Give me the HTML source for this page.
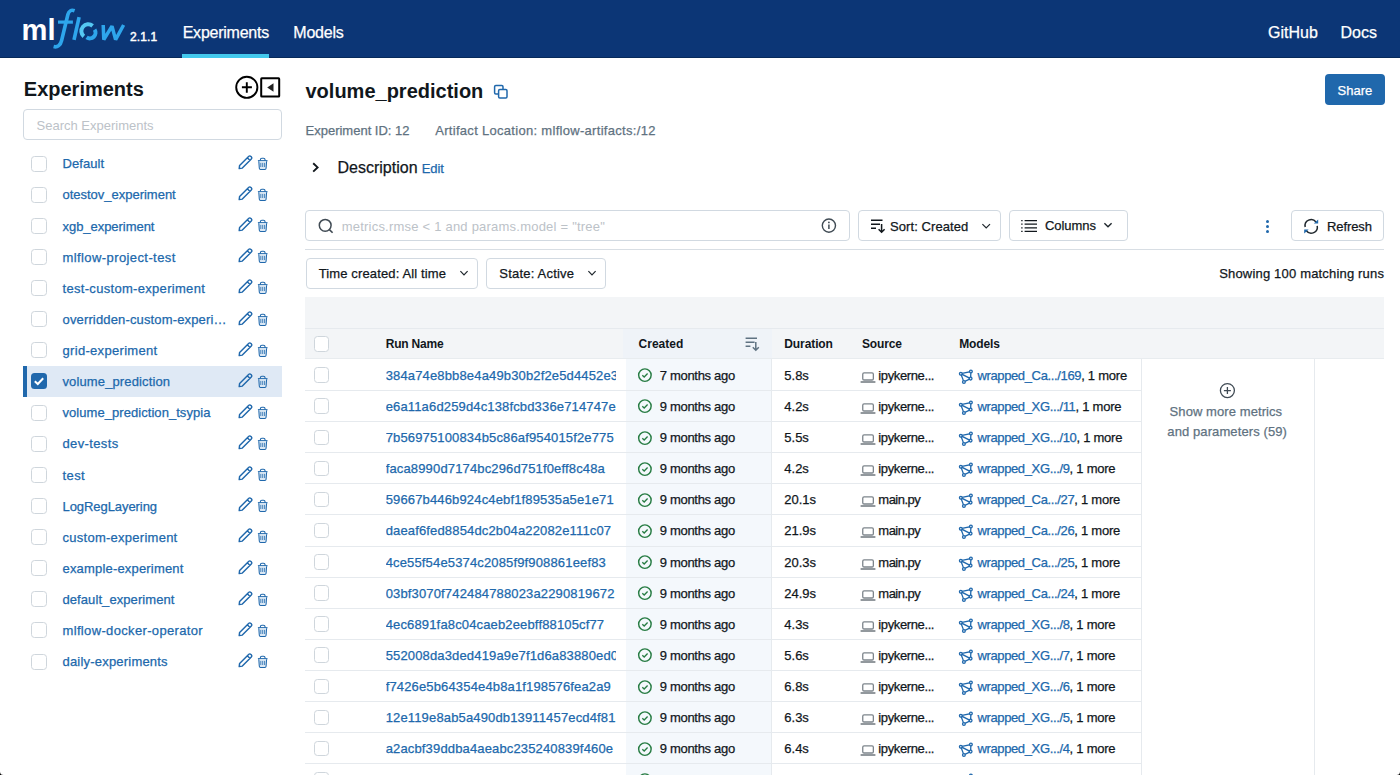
<!DOCTYPE html><html><head><meta charset="utf-8"><style>
html,body{margin:0;padding:0;width:1400px;height:775px;overflow:hidden;background:#fff;font-family:"Liberation Sans", sans-serif;}
.t{position:absolute;white-space:nowrap;-webkit-text-stroke:0.25px currentColor;}
.b{position:absolute;box-sizing:border-box;}
svg{position:absolute;overflow:visible;}
</style></head><body>
<div class="b" style="left:0px;top:0px;width:1400px;height:58px;background:#0c3676;border-bottom:1px solid #072a5a;"></div>
<div class="b" style="left:182px;top:54px;width:87px;height:4px;background:#43c9ed;"></div>
<div class="t" style="left:182.7px;top:25.26px;font-size:16px;line-height:16px;color:#fff;font-weight:400;letter-spacing:-0.24px;">Experiments</div>
<div class="t" style="left:293.3px;top:25.26px;font-size:16px;line-height:16px;color:#fff;font-weight:400;letter-spacing:-0.22px;">Models</div>
<div class="t" style="left:1268px;top:25.26px;font-size:16px;line-height:16px;color:#fff;font-weight:400;">GitHub</div>
<div class="t" style="left:1340.5px;top:25.26px;font-size:16px;line-height:16px;color:#fff;font-weight:400;">Docs</div>
<svg style="left:0;top:0" width="170" height="58">
<text x="21.5" y="40" font-family="Liberation Sans" font-weight="700" font-size="29" fill="#fff" textLength="34" lengthAdjust="spacingAndGlyphs">ml</text>
<path d="M74.6 10.8 C71.5 9.6 68.8 10.6 67.9 14.5 L61.6 40.5 C60.6 45 57.6 47.6 53.6 46.6" stroke="#2ea6ec" stroke-width="3.6" fill="none" stroke-linecap="butt"/>
<path d="M58 22.1 L72.9 22.1" stroke="#2ea6ec" stroke-width="3.2" fill="none"/>
<path d="M79.1 17.2 L74 39.8" stroke="#2ea6ec" stroke-width="3.6" fill="none"/>
<path d="M83.8 36.4 A5.7 5.7 0 0 1 92.6 25.9" stroke="#55c8f2" stroke-width="4" fill="none"/>
<path d="M94.6 29.6 A5.7 5.7 0 0 1 86.6 37.4" stroke="#2ea6ec" stroke-width="4" fill="none"/>
<path d="M103.2 25 L103.8 39.6 L112 26.2 L115.6 39.6 L123.6 25" stroke="#2ea6ec" stroke-width="3.5" fill="none" stroke-linejoin="bevel"/>
</svg>
<div class="t" style="left:130px;top:30.84px;font-size:12px;line-height:12px;color:#fff;font-weight:400;letter-spacing:0.1px;-webkit-text-stroke:0.45px #fff;">2.1.1</div>
<div class="t" style="left:23.8px;top:79.07px;font-size:20px;line-height:20px;color:#11171c;font-weight:700;-webkit-text-stroke:0;">Experiments</div>
<svg style="left:234px;top:75px" width="48" height="25">
<circle cx="12.8" cy="12.3" r="10.6" stroke="#000" stroke-width="1.9" fill="none"/>
<path d="M7.9 12.3 H17.9 M12.8 7.3 V17.7" stroke="#000" stroke-width="1.9"/>
<rect x="27.2" y="3.3" width="18" height="18.2" stroke="#000" stroke-width="2" fill="none" rx="0.6"/>
<path d="M33.2 12.4 L39.5 8.2 L39.5 16.8 Z" fill="#222"/>
</svg>
<div class="b" style="left:23px;top:109px;width:259px;height:31px;border:1px solid #d1d9e1;border-radius:4px;"></div>
<div class="t" style="left:36.5px;top:118.50px;font-size:13px;line-height:13px;color:#bcc2c8;font-weight:400;-webkit-text-stroke:0;">Search Experiments</div>
<div class="b" style="left:31px;top:155.56px;width:16px;height:16.0px;border:1px solid #cfd6dc;border-radius:3.5px;background:#fff;"></div>
<div class="t" style="left:62.5px;top:157.36px;font-size:13px;line-height:13px;color:#2068ac;font-weight:400;letter-spacing:0.057px;">Default</div>
<svg style="left:237px;top:154.96px" width="34" height="16">
<path d="M2.2 13.6 L2.6 10.4 L11.6 1.4 C12.3 0.7 13.2 0.7 13.9 1.4 L14.3 1.8 C15 2.5 15 3.4 14.3 4.1 L5.3 13.1 Z M10.3 2.7 L13 5.4" stroke="#2068ac" stroke-width="1.45" fill="none" stroke-linejoin="round"/>
<path d="M20.9 5.7 H30.5" stroke="#2068ac" stroke-width="1.15"/>
<path d="M23.4 5.5 V4.6 C23.4 3.7 24 3.3 24.9 3.3 H26.5 C27.4 3.3 28 3.7 28 4.6 V5.5" stroke="#2068ac" stroke-width="1.1" fill="none"/>
<path d="M21.8 6.2 L22.3 13.3 C22.4 14 22.8 14.4 23.5 14.4 H27.9 C28.6 14.4 29 14 29.1 13.3 L29.6 6.2" stroke="#2068ac" stroke-width="1.05" fill="#dbe8f4"/>
<path d="M23.8 7.9 V12 M25.7 7.9 V12 M27.6 7.9 V12" stroke="#2068ac" stroke-width="0.8"/>
</svg>
<div class="b" style="left:31px;top:186.685px;width:16px;height:16.0px;border:1px solid #cfd6dc;border-radius:3.5px;background:#fff;"></div>
<div class="t" style="left:62.5px;top:188.48px;font-size:13px;line-height:13px;color:#2068ac;font-weight:400;letter-spacing:-0.014px;">otestov_experiment</div>
<svg style="left:237px;top:186.09px" width="34" height="16">
<path d="M2.2 13.6 L2.6 10.4 L11.6 1.4 C12.3 0.7 13.2 0.7 13.9 1.4 L14.3 1.8 C15 2.5 15 3.4 14.3 4.1 L5.3 13.1 Z M10.3 2.7 L13 5.4" stroke="#2068ac" stroke-width="1.45" fill="none" stroke-linejoin="round"/>
<path d="M20.9 5.7 H30.5" stroke="#2068ac" stroke-width="1.15"/>
<path d="M23.4 5.5 V4.6 C23.4 3.7 24 3.3 24.9 3.3 H26.5 C27.4 3.3 28 3.7 28 4.6 V5.5" stroke="#2068ac" stroke-width="1.1" fill="none"/>
<path d="M21.8 6.2 L22.3 13.3 C22.4 14 22.8 14.4 23.5 14.4 H27.9 C28.6 14.4 29 14 29.1 13.3 L29.6 6.2" stroke="#2068ac" stroke-width="1.05" fill="#dbe8f4"/>
<path d="M23.8 7.9 V12 M25.7 7.9 V12 M27.6 7.9 V12" stroke="#2068ac" stroke-width="0.8"/>
</svg>
<div class="b" style="left:31px;top:217.81px;width:16px;height:16.0px;border:1px solid #cfd6dc;border-radius:3.5px;background:#fff;"></div>
<div class="t" style="left:62.5px;top:219.61px;font-size:13px;line-height:13px;color:#2068ac;font-weight:400;letter-spacing:-0.043px;">xgb_experiment</div>
<svg style="left:237px;top:217.21px" width="34" height="16">
<path d="M2.2 13.6 L2.6 10.4 L11.6 1.4 C12.3 0.7 13.2 0.7 13.9 1.4 L14.3 1.8 C15 2.5 15 3.4 14.3 4.1 L5.3 13.1 Z M10.3 2.7 L13 5.4" stroke="#2068ac" stroke-width="1.45" fill="none" stroke-linejoin="round"/>
<path d="M20.9 5.7 H30.5" stroke="#2068ac" stroke-width="1.15"/>
<path d="M23.4 5.5 V4.6 C23.4 3.7 24 3.3 24.9 3.3 H26.5 C27.4 3.3 28 3.7 28 4.6 V5.5" stroke="#2068ac" stroke-width="1.1" fill="none"/>
<path d="M21.8 6.2 L22.3 13.3 C22.4 14 22.8 14.4 23.5 14.4 H27.9 C28.6 14.4 29 14 29.1 13.3 L29.6 6.2" stroke="#2068ac" stroke-width="1.05" fill="#dbe8f4"/>
<path d="M23.8 7.9 V12 M25.7 7.9 V12 M27.6 7.9 V12" stroke="#2068ac" stroke-width="0.8"/>
</svg>
<div class="b" style="left:31px;top:248.935px;width:16px;height:16.0px;border:1px solid #cfd6dc;border-radius:3.5px;background:#fff;"></div>
<div class="t" style="left:62.5px;top:250.73px;font-size:13px;line-height:13px;color:#2068ac;font-weight:400;letter-spacing:0.407px;">mlflow-project-test</div>
<svg style="left:237px;top:248.34px" width="34" height="16">
<path d="M2.2 13.6 L2.6 10.4 L11.6 1.4 C12.3 0.7 13.2 0.7 13.9 1.4 L14.3 1.8 C15 2.5 15 3.4 14.3 4.1 L5.3 13.1 Z M10.3 2.7 L13 5.4" stroke="#2068ac" stroke-width="1.45" fill="none" stroke-linejoin="round"/>
<path d="M20.9 5.7 H30.5" stroke="#2068ac" stroke-width="1.15"/>
<path d="M23.4 5.5 V4.6 C23.4 3.7 24 3.3 24.9 3.3 H26.5 C27.4 3.3 28 3.7 28 4.6 V5.5" stroke="#2068ac" stroke-width="1.1" fill="none"/>
<path d="M21.8 6.2 L22.3 13.3 C22.4 14 22.8 14.4 23.5 14.4 H27.9 C28.6 14.4 29 14 29.1 13.3 L29.6 6.2" stroke="#2068ac" stroke-width="1.05" fill="#dbe8f4"/>
<path d="M23.8 7.9 V12 M25.7 7.9 V12 M27.6 7.9 V12" stroke="#2068ac" stroke-width="0.8"/>
</svg>
<div class="b" style="left:31px;top:280.06px;width:16px;height:16.0px;border:1px solid #cfd6dc;border-radius:3.5px;background:#fff;"></div>
<div class="t" style="left:62.5px;top:281.86px;font-size:13px;line-height:13px;color:#2068ac;font-weight:400;letter-spacing:0.308px;">test-custom-experiment</div>
<svg style="left:237px;top:279.46px" width="34" height="16">
<path d="M2.2 13.6 L2.6 10.4 L11.6 1.4 C12.3 0.7 13.2 0.7 13.9 1.4 L14.3 1.8 C15 2.5 15 3.4 14.3 4.1 L5.3 13.1 Z M10.3 2.7 L13 5.4" stroke="#2068ac" stroke-width="1.45" fill="none" stroke-linejoin="round"/>
<path d="M20.9 5.7 H30.5" stroke="#2068ac" stroke-width="1.15"/>
<path d="M23.4 5.5 V4.6 C23.4 3.7 24 3.3 24.9 3.3 H26.5 C27.4 3.3 28 3.7 28 4.6 V5.5" stroke="#2068ac" stroke-width="1.1" fill="none"/>
<path d="M21.8 6.2 L22.3 13.3 C22.4 14 22.8 14.4 23.5 14.4 H27.9 C28.6 14.4 29 14 29.1 13.3 L29.6 6.2" stroke="#2068ac" stroke-width="1.05" fill="#dbe8f4"/>
<path d="M23.8 7.9 V12 M25.7 7.9 V12 M27.6 7.9 V12" stroke="#2068ac" stroke-width="0.8"/>
</svg>
<div class="b" style="left:31px;top:311.185px;width:16px;height:16.0px;border:1px solid #cfd6dc;border-radius:3.5px;background:#fff;"></div>
<div class="t" style="left:62.5px;top:312.98px;font-size:13px;line-height:13px;color:#2068ac;font-weight:400;letter-spacing:0.148px;">overridden-custom-experi…</div>
<svg style="left:237px;top:310.58px" width="34" height="16">
<path d="M2.2 13.6 L2.6 10.4 L11.6 1.4 C12.3 0.7 13.2 0.7 13.9 1.4 L14.3 1.8 C15 2.5 15 3.4 14.3 4.1 L5.3 13.1 Z M10.3 2.7 L13 5.4" stroke="#2068ac" stroke-width="1.45" fill="none" stroke-linejoin="round"/>
<path d="M20.9 5.7 H30.5" stroke="#2068ac" stroke-width="1.15"/>
<path d="M23.4 5.5 V4.6 C23.4 3.7 24 3.3 24.9 3.3 H26.5 C27.4 3.3 28 3.7 28 4.6 V5.5" stroke="#2068ac" stroke-width="1.1" fill="none"/>
<path d="M21.8 6.2 L22.3 13.3 C22.4 14 22.8 14.4 23.5 14.4 H27.9 C28.6 14.4 29 14 29.1 13.3 L29.6 6.2" stroke="#2068ac" stroke-width="1.05" fill="#dbe8f4"/>
<path d="M23.8 7.9 V12 M25.7 7.9 V12 M27.6 7.9 V12" stroke="#2068ac" stroke-width="0.8"/>
</svg>
<div class="b" style="left:31px;top:342.31px;width:16px;height:16.0px;border:1px solid #cfd6dc;border-radius:3.5px;background:#fff;"></div>
<div class="t" style="left:62.5px;top:344.11px;font-size:13px;line-height:13px;color:#2068ac;font-weight:400;letter-spacing:0.311px;">grid-experiment</div>
<svg style="left:237px;top:341.71px" width="34" height="16">
<path d="M2.2 13.6 L2.6 10.4 L11.6 1.4 C12.3 0.7 13.2 0.7 13.9 1.4 L14.3 1.8 C15 2.5 15 3.4 14.3 4.1 L5.3 13.1 Z M10.3 2.7 L13 5.4" stroke="#2068ac" stroke-width="1.45" fill="none" stroke-linejoin="round"/>
<path d="M20.9 5.7 H30.5" stroke="#2068ac" stroke-width="1.15"/>
<path d="M23.4 5.5 V4.6 C23.4 3.7 24 3.3 24.9 3.3 H26.5 C27.4 3.3 28 3.7 28 4.6 V5.5" stroke="#2068ac" stroke-width="1.1" fill="none"/>
<path d="M21.8 6.2 L22.3 13.3 C22.4 14 22.8 14.4 23.5 14.4 H27.9 C28.6 14.4 29 14 29.1 13.3 L29.6 6.2" stroke="#2068ac" stroke-width="1.05" fill="#dbe8f4"/>
<path d="M23.8 7.9 V12 M25.7 7.9 V12 M27.6 7.9 V12" stroke="#2068ac" stroke-width="0.8"/>
</svg>
<div class="b" style="left:23px;top:365.875px;width:259px;height:31.125px;background:#dfe9f5;"></div>
<div class="b" style="left:23px;top:365.875px;width:4px;height:31.125px;background:#2068ac;"></div>
<svg style="left:31px;top:373.44px" width="16" height="16"><rect x="0" y="0" width="16" height="16" rx="3.5" fill="#2068ac"/><path d="M3.8 8.2 L6.8 11 L12.2 5.2" stroke="#fff" stroke-width="2" fill="none"/></svg>
<div class="t" style="left:62.5px;top:375.23px;font-size:13px;line-height:13px;color:#2068ac;font-weight:400;letter-spacing:0.123px;">volume_prediction</div>
<svg style="left:237px;top:372.83px" width="34" height="16">
<path d="M2.2 13.6 L2.6 10.4 L11.6 1.4 C12.3 0.7 13.2 0.7 13.9 1.4 L14.3 1.8 C15 2.5 15 3.4 14.3 4.1 L5.3 13.1 Z M10.3 2.7 L13 5.4" stroke="#2068ac" stroke-width="1.45" fill="none" stroke-linejoin="round"/>
<path d="M20.9 5.7 H30.5" stroke="#2068ac" stroke-width="1.15"/>
<path d="M23.4 5.5 V4.6 C23.4 3.7 24 3.3 24.9 3.3 H26.5 C27.4 3.3 28 3.7 28 4.6 V5.5" stroke="#2068ac" stroke-width="1.1" fill="none"/>
<path d="M21.8 6.2 L22.3 13.3 C22.4 14 22.8 14.4 23.5 14.4 H27.9 C28.6 14.4 29 14 29.1 13.3 L29.6 6.2" stroke="#2068ac" stroke-width="1.05" fill="#dbe8f4"/>
<path d="M23.8 7.9 V12 M25.7 7.9 V12 M27.6 7.9 V12" stroke="#2068ac" stroke-width="0.8"/>
</svg>
<div class="b" style="left:31px;top:404.56px;width:16px;height:16.0px;border:1px solid #cfd6dc;border-radius:3.5px;background:#fff;"></div>
<div class="t" style="left:62.5px;top:406.36px;font-size:13px;line-height:13px;color:#2068ac;font-weight:400;letter-spacing:0.054px;">volume_prediction_tsypia</div>
<svg style="left:237px;top:403.96px" width="34" height="16">
<path d="M2.2 13.6 L2.6 10.4 L11.6 1.4 C12.3 0.7 13.2 0.7 13.9 1.4 L14.3 1.8 C15 2.5 15 3.4 14.3 4.1 L5.3 13.1 Z M10.3 2.7 L13 5.4" stroke="#2068ac" stroke-width="1.45" fill="none" stroke-linejoin="round"/>
<path d="M20.9 5.7 H30.5" stroke="#2068ac" stroke-width="1.15"/>
<path d="M23.4 5.5 V4.6 C23.4 3.7 24 3.3 24.9 3.3 H26.5 C27.4 3.3 28 3.7 28 4.6 V5.5" stroke="#2068ac" stroke-width="1.1" fill="none"/>
<path d="M21.8 6.2 L22.3 13.3 C22.4 14 22.8 14.4 23.5 14.4 H27.9 C28.6 14.4 29 14 29.1 13.3 L29.6 6.2" stroke="#2068ac" stroke-width="1.05" fill="#dbe8f4"/>
<path d="M23.8 7.9 V12 M25.7 7.9 V12 M27.6 7.9 V12" stroke="#2068ac" stroke-width="0.8"/>
</svg>
<div class="b" style="left:31px;top:435.685px;width:16px;height:16.0px;border:1px solid #cfd6dc;border-radius:3.5px;background:#fff;"></div>
<div class="t" style="left:62.5px;top:437.48px;font-size:13px;line-height:13px;color:#2068ac;font-weight:400;letter-spacing:0.361px;">dev-tests</div>
<svg style="left:237px;top:435.08px" width="34" height="16">
<path d="M2.2 13.6 L2.6 10.4 L11.6 1.4 C12.3 0.7 13.2 0.7 13.9 1.4 L14.3 1.8 C15 2.5 15 3.4 14.3 4.1 L5.3 13.1 Z M10.3 2.7 L13 5.4" stroke="#2068ac" stroke-width="1.45" fill="none" stroke-linejoin="round"/>
<path d="M20.9 5.7 H30.5" stroke="#2068ac" stroke-width="1.15"/>
<path d="M23.4 5.5 V4.6 C23.4 3.7 24 3.3 24.9 3.3 H26.5 C27.4 3.3 28 3.7 28 4.6 V5.5" stroke="#2068ac" stroke-width="1.1" fill="none"/>
<path d="M21.8 6.2 L22.3 13.3 C22.4 14 22.8 14.4 23.5 14.4 H27.9 C28.6 14.4 29 14 29.1 13.3 L29.6 6.2" stroke="#2068ac" stroke-width="1.05" fill="#dbe8f4"/>
<path d="M23.8 7.9 V12 M25.7 7.9 V12 M27.6 7.9 V12" stroke="#2068ac" stroke-width="0.8"/>
</svg>
<div class="b" style="left:31px;top:466.81px;width:16px;height:16.0px;border:1px solid #cfd6dc;border-radius:3.5px;background:#fff;"></div>
<div class="t" style="left:62.5px;top:468.61px;font-size:13px;line-height:13px;color:#2068ac;font-weight:400;letter-spacing:0.408px;">test</div>
<svg style="left:237px;top:466.21px" width="34" height="16">
<path d="M2.2 13.6 L2.6 10.4 L11.6 1.4 C12.3 0.7 13.2 0.7 13.9 1.4 L14.3 1.8 C15 2.5 15 3.4 14.3 4.1 L5.3 13.1 Z M10.3 2.7 L13 5.4" stroke="#2068ac" stroke-width="1.45" fill="none" stroke-linejoin="round"/>
<path d="M20.9 5.7 H30.5" stroke="#2068ac" stroke-width="1.15"/>
<path d="M23.4 5.5 V4.6 C23.4 3.7 24 3.3 24.9 3.3 H26.5 C27.4 3.3 28 3.7 28 4.6 V5.5" stroke="#2068ac" stroke-width="1.1" fill="none"/>
<path d="M21.8 6.2 L22.3 13.3 C22.4 14 22.8 14.4 23.5 14.4 H27.9 C28.6 14.4 29 14 29.1 13.3 L29.6 6.2" stroke="#2068ac" stroke-width="1.05" fill="#dbe8f4"/>
<path d="M23.8 7.9 V12 M25.7 7.9 V12 M27.6 7.9 V12" stroke="#2068ac" stroke-width="0.8"/>
</svg>
<div class="b" style="left:31px;top:497.935px;width:16px;height:15.999999999999943px;border:1px solid #cfd6dc;border-radius:3.5px;background:#fff;"></div>
<div class="t" style="left:62.5px;top:499.73px;font-size:13px;line-height:13px;color:#2068ac;font-weight:400;letter-spacing:-0.065px;">LogRegLayering</div>
<svg style="left:237px;top:497.33px" width="34" height="16">
<path d="M2.2 13.6 L2.6 10.4 L11.6 1.4 C12.3 0.7 13.2 0.7 13.9 1.4 L14.3 1.8 C15 2.5 15 3.4 14.3 4.1 L5.3 13.1 Z M10.3 2.7 L13 5.4" stroke="#2068ac" stroke-width="1.45" fill="none" stroke-linejoin="round"/>
<path d="M20.9 5.7 H30.5" stroke="#2068ac" stroke-width="1.15"/>
<path d="M23.4 5.5 V4.6 C23.4 3.7 24 3.3 24.9 3.3 H26.5 C27.4 3.3 28 3.7 28 4.6 V5.5" stroke="#2068ac" stroke-width="1.1" fill="none"/>
<path d="M21.8 6.2 L22.3 13.3 C22.4 14 22.8 14.4 23.5 14.4 H27.9 C28.6 14.4 29 14 29.1 13.3 L29.6 6.2" stroke="#2068ac" stroke-width="1.05" fill="#dbe8f4"/>
<path d="M23.8 7.9 V12 M25.7 7.9 V12 M27.6 7.9 V12" stroke="#2068ac" stroke-width="0.8"/>
</svg>
<div class="b" style="left:31px;top:529.06px;width:16px;height:16.0px;border:1px solid #cfd6dc;border-radius:3.5px;background:#fff;"></div>
<div class="t" style="left:62.5px;top:530.86px;font-size:13px;line-height:13px;color:#2068ac;font-weight:400;letter-spacing:0.262px;">custom-experiment</div>
<svg style="left:237px;top:528.46px" width="34" height="16">
<path d="M2.2 13.6 L2.6 10.4 L11.6 1.4 C12.3 0.7 13.2 0.7 13.9 1.4 L14.3 1.8 C15 2.5 15 3.4 14.3 4.1 L5.3 13.1 Z M10.3 2.7 L13 5.4" stroke="#2068ac" stroke-width="1.45" fill="none" stroke-linejoin="round"/>
<path d="M20.9 5.7 H30.5" stroke="#2068ac" stroke-width="1.15"/>
<path d="M23.4 5.5 V4.6 C23.4 3.7 24 3.3 24.9 3.3 H26.5 C27.4 3.3 28 3.7 28 4.6 V5.5" stroke="#2068ac" stroke-width="1.1" fill="none"/>
<path d="M21.8 6.2 L22.3 13.3 C22.4 14 22.8 14.4 23.5 14.4 H27.9 C28.6 14.4 29 14 29.1 13.3 L29.6 6.2" stroke="#2068ac" stroke-width="1.05" fill="#dbe8f4"/>
<path d="M23.8 7.9 V12 M25.7 7.9 V12 M27.6 7.9 V12" stroke="#2068ac" stroke-width="0.8"/>
</svg>
<div class="b" style="left:31px;top:560.185px;width:16px;height:16.0px;border:1px solid #cfd6dc;border-radius:3.5px;background:#fff;"></div>
<div class="t" style="left:62.5px;top:561.98px;font-size:13px;line-height:13px;color:#2068ac;font-weight:400;letter-spacing:0.179px;">example-experiment</div>
<svg style="left:237px;top:559.58px" width="34" height="16">
<path d="M2.2 13.6 L2.6 10.4 L11.6 1.4 C12.3 0.7 13.2 0.7 13.9 1.4 L14.3 1.8 C15 2.5 15 3.4 14.3 4.1 L5.3 13.1 Z M10.3 2.7 L13 5.4" stroke="#2068ac" stroke-width="1.45" fill="none" stroke-linejoin="round"/>
<path d="M20.9 5.7 H30.5" stroke="#2068ac" stroke-width="1.15"/>
<path d="M23.4 5.5 V4.6 C23.4 3.7 24 3.3 24.9 3.3 H26.5 C27.4 3.3 28 3.7 28 4.6 V5.5" stroke="#2068ac" stroke-width="1.1" fill="none"/>
<path d="M21.8 6.2 L22.3 13.3 C22.4 14 22.8 14.4 23.5 14.4 H27.9 C28.6 14.4 29 14 29.1 13.3 L29.6 6.2" stroke="#2068ac" stroke-width="1.05" fill="#dbe8f4"/>
<path d="M23.8 7.9 V12 M25.7 7.9 V12 M27.6 7.9 V12" stroke="#2068ac" stroke-width="0.8"/>
</svg>
<div class="b" style="left:31px;top:591.31px;width:16px;height:16.0px;border:1px solid #cfd6dc;border-radius:3.5px;background:#fff;"></div>
<div class="t" style="left:62.5px;top:593.11px;font-size:13px;line-height:13px;color:#2068ac;font-weight:400;letter-spacing:0.079px;">default_experiment</div>
<svg style="left:237px;top:590.71px" width="34" height="16">
<path d="M2.2 13.6 L2.6 10.4 L11.6 1.4 C12.3 0.7 13.2 0.7 13.9 1.4 L14.3 1.8 C15 2.5 15 3.4 14.3 4.1 L5.3 13.1 Z M10.3 2.7 L13 5.4" stroke="#2068ac" stroke-width="1.45" fill="none" stroke-linejoin="round"/>
<path d="M20.9 5.7 H30.5" stroke="#2068ac" stroke-width="1.15"/>
<path d="M23.4 5.5 V4.6 C23.4 3.7 24 3.3 24.9 3.3 H26.5 C27.4 3.3 28 3.7 28 4.6 V5.5" stroke="#2068ac" stroke-width="1.1" fill="none"/>
<path d="M21.8 6.2 L22.3 13.3 C22.4 14 22.8 14.4 23.5 14.4 H27.9 C28.6 14.4 29 14 29.1 13.3 L29.6 6.2" stroke="#2068ac" stroke-width="1.05" fill="#dbe8f4"/>
<path d="M23.8 7.9 V12 M25.7 7.9 V12 M27.6 7.9 V12" stroke="#2068ac" stroke-width="0.8"/>
</svg>
<div class="b" style="left:31px;top:622.435px;width:16px;height:16.0px;border:1px solid #cfd6dc;border-radius:3.5px;background:#fff;"></div>
<div class="t" style="left:62.5px;top:624.23px;font-size:13px;line-height:13px;color:#2068ac;font-weight:400;letter-spacing:0.344px;">mlflow-docker-operator</div>
<svg style="left:237px;top:621.83px" width="34" height="16">
<path d="M2.2 13.6 L2.6 10.4 L11.6 1.4 C12.3 0.7 13.2 0.7 13.9 1.4 L14.3 1.8 C15 2.5 15 3.4 14.3 4.1 L5.3 13.1 Z M10.3 2.7 L13 5.4" stroke="#2068ac" stroke-width="1.45" fill="none" stroke-linejoin="round"/>
<path d="M20.9 5.7 H30.5" stroke="#2068ac" stroke-width="1.15"/>
<path d="M23.4 5.5 V4.6 C23.4 3.7 24 3.3 24.9 3.3 H26.5 C27.4 3.3 28 3.7 28 4.6 V5.5" stroke="#2068ac" stroke-width="1.1" fill="none"/>
<path d="M21.8 6.2 L22.3 13.3 C22.4 14 22.8 14.4 23.5 14.4 H27.9 C28.6 14.4 29 14 29.1 13.3 L29.6 6.2" stroke="#2068ac" stroke-width="1.05" fill="#dbe8f4"/>
<path d="M23.8 7.9 V12 M25.7 7.9 V12 M27.6 7.9 V12" stroke="#2068ac" stroke-width="0.8"/>
</svg>
<div class="b" style="left:31px;top:653.56px;width:16px;height:16.0px;border:1px solid #cfd6dc;border-radius:3.5px;background:#fff;"></div>
<div class="t" style="left:62.5px;top:655.36px;font-size:13px;line-height:13px;color:#2068ac;font-weight:400;letter-spacing:0.201px;">daily-experiments</div>
<svg style="left:237px;top:652.96px" width="34" height="16">
<path d="M2.2 13.6 L2.6 10.4 L11.6 1.4 C12.3 0.7 13.2 0.7 13.9 1.4 L14.3 1.8 C15 2.5 15 3.4 14.3 4.1 L5.3 13.1 Z M10.3 2.7 L13 5.4" stroke="#2068ac" stroke-width="1.45" fill="none" stroke-linejoin="round"/>
<path d="M20.9 5.7 H30.5" stroke="#2068ac" stroke-width="1.15"/>
<path d="M23.4 5.5 V4.6 C23.4 3.7 24 3.3 24.9 3.3 H26.5 C27.4 3.3 28 3.7 28 4.6 V5.5" stroke="#2068ac" stroke-width="1.1" fill="none"/>
<path d="M21.8 6.2 L22.3 13.3 C22.4 14 22.8 14.4 23.5 14.4 H27.9 C28.6 14.4 29 14 29.1 13.3 L29.6 6.2" stroke="#2068ac" stroke-width="1.05" fill="#dbe8f4"/>
<path d="M23.8 7.9 V12 M25.7 7.9 V12 M27.6 7.9 V12" stroke="#2068ac" stroke-width="0.8"/>
</svg>
<div class="t" style="left:305.5px;top:81.07px;font-size:20px;line-height:20px;color:#11171c;font-weight:700;-webkit-text-stroke:0;">volume_prediction</div>
<svg style="left:493px;top:84px" width="16" height="16"><rect x="1.6" y="1.6" width="8.4" height="8.4" rx="1.2" stroke="#2068ac" stroke-width="1.5" fill="#fff"/><rect x="5.6" y="5.6" width="8.4" height="8.4" rx="1.2" stroke="#2068ac" stroke-width="1.5" fill="#fff"/></svg>
<div class="t" style="left:305.5px;top:124.00px;font-size:13px;line-height:13px;color:#5f7281;font-weight:400;">Experiment ID: 12</div>
<div class="t" style="left:435.2px;top:124.00px;font-size:13px;line-height:13px;color:#5f7281;font-weight:400;letter-spacing:0.3px;">Artifact Location: mlflow-artifacts:/12</div>
<svg style="left:310px;top:160px" width="12" height="14"><path d="M3.2 3.2 L7.6 7.4 L3.2 11.6" stroke="#11171c" stroke-width="1.9" fill="none"/></svg>
<div class="t" style="left:337.5px;top:160.06px;font-size:16px;line-height:16px;color:#11171c;font-weight:400;">Description</div>
<div class="t" style="left:421.7px;top:161.60px;font-size:13px;line-height:13px;color:#2068ac;font-weight:400;letter-spacing:-0.1px;">Edit</div>
<div class="b" style="left:305px;top:210px;width:544.5px;height:31px;border:1px solid #d1d9e1;border-radius:4px;"></div>
<svg style="left:317px;top:217px" width="18" height="18"><circle cx="8.2" cy="8.3" r="5.9" stroke="#404b54" stroke-width="1.5" fill="none"/><path d="M12.4 12.6 L15.6 15.8" stroke="#404b54" stroke-width="1.6"/></svg>
<div class="t" style="left:341.7px;top:219.50px;font-size:13px;line-height:13px;color:#bcc2c8;font-weight:400;letter-spacing:0.22px;-webkit-text-stroke:0;">metrics.rmse &lt; 1 and params.model = "tree"</div>
<svg style="left:820px;top:217px" width="18" height="18"><circle cx="8.9" cy="8.6" r="6.6" stroke="#404b54" stroke-width="1.4" fill="none"/><path d="M8.9 7.6 V12" stroke="#404b54" stroke-width="1.5"/><circle cx="8.9" cy="5.4" r="0.9" fill="#404b54"/></svg>
<div class="b" style="left:857.5px;top:210px;width:143.0px;height:31px;border:1px solid #d1d9e1;border-radius:4px;"></div>
<svg style="left:869px;top:218px" width="18" height="16"><path d="M2 2.2 H13.5 M2 6.2 H11 M2 10.2 H7" stroke="#11171c" stroke-width="1.5"/><path d="M12.6 6 V14 M9.6 11.2 L12.6 14.2 L15.6 11.2" stroke="#11171c" stroke-width="1.5" fill="none"/></svg>
<div class="t" style="left:890px;top:219.50px;font-size:13px;line-height:13px;color:#11171c;font-weight:400;letter-spacing:0.08px;">Sort: Created</div>
<svg style="left:980px;top:221px" width="12" height="10"><path d="M2.4 3.2 L6.2 7 L10 3.2" stroke="#1f272d" stroke-width="1.2" fill="none"/></svg>
<div class="b" style="left:1009px;top:210px;width:118.5px;height:31px;border:1px solid #d1d9e1;border-radius:4px;"></div>
<svg style="left:1020px;top:218px" width="18" height="16"><path d="M1.2 2.6 H2.6 M1.2 6.2 H2.6 M1.2 9.8 H2.6 M1.2 13.4 H2.6" stroke="#11171c" stroke-width="1.3"/><path d="M4.6 2.6 H17 M4.6 6.2 H17 M4.6 9.8 H17 M4.6 13.4 H17" stroke="#11171c" stroke-width="1.3"/></svg>
<div class="t" style="left:1045px;top:219.00px;font-size:13px;line-height:13px;color:#11171c;font-weight:400;letter-spacing:-0.05px;">Columns</div>
<svg style="left:1102px;top:220px" width="12" height="10"><path d="M2.4 3.2 L6 6.8 L9.6 3.2" stroke="#1f272d" stroke-width="1.4" fill="none"/></svg>
<div class="b" style="left:1265.6px;top:219.5px;width:3.0px;height:3.0px;background:#2068ac;border-radius:50%;"></div>
<div class="b" style="left:1265.6px;top:224.5px;width:3.0px;height:3.0px;background:#2068ac;border-radius:50%;"></div>
<div class="b" style="left:1265.6px;top:229.5px;width:3.0px;height:3.0px;background:#2068ac;border-radius:50%;"></div>
<div class="b" style="left:1291px;top:210px;width:93px;height:31px;border:1px solid #d1d9e1;border-radius:4px;"></div>
<svg style="left:1302px;top:217px" width="18" height="18"><path d="M3.2 10 A6.1 6.1 0 0 1 14 5" stroke="#1f272d" stroke-width="1.5" fill="none"/><path d="M15.2 8.8 A6.1 6.1 0 0 1 4.4 13.8" stroke="#1f272d" stroke-width="1.5" fill="none"/><path d="M11.8 6.4 L16.2 6.6 L16.2 2.4 Z" fill="#2068ac"/><path d="M6.6 12.6 L2.2 12.4 L2.2 16.4 Z" fill="#2068ac"/></svg>
<div class="t" style="left:1327.1px;top:219.50px;font-size:13px;line-height:13px;color:#11171c;font-weight:400;letter-spacing:-0.12px;">Refresh</div>
<div class="b" style="left:305px;top:248.5px;width:1079px;height:1.0px;background:#d8dee4;"></div>
<div class="b" style="left:305.5px;top:258px;width:172.5px;height:31px;border:1px solid #d1d9e1;border-radius:4px;"></div>
<div class="t" style="left:318.7px;top:267.00px;font-size:13px;line-height:13px;color:#11171c;font-weight:400;letter-spacing:0.13px;">Time created: All time</div>
<svg style="left:458px;top:268px" width="12" height="10"><path d="M2.4 3.2 L6 6.8 L9.6 3.2" stroke="#1f272d" stroke-width="1.2" fill="none"/></svg>
<div class="b" style="left:486px;top:258px;width:120px;height:31px;border:1px solid #d1d9e1;border-radius:4px;"></div>
<div class="t" style="left:499.3px;top:267.00px;font-size:13px;line-height:13px;color:#11171c;font-weight:400;letter-spacing:0.2px;">State: Active</div>
<svg style="left:585.5px;top:268px" width="12" height="10"><path d="M2.4 3.2 L6 6.8 L9.6 3.2" stroke="#1f272d" stroke-width="1.2" fill="none"/></svg>
<div class="t" style="left:1219.2px;top:267.00px;font-size:13px;line-height:13px;color:#11171c;font-weight:400;letter-spacing:0.18px;">Showing 100 matching runs</div>
<div class="b" style="left:305px;top:296.5px;width:1079px;height:32.0px;background:#f3f5f7;"></div>
<div class="b" style="left:305px;top:328.3px;width:1079px;height:31.0px;background:#f3f5f7;border-top:1px solid #e6eaee;"></div>
<div class="b" style="left:623px;top:328.3px;width:148.5px;height:31.0px;background:#eff3f8;border-top:1px solid #e6eaee;"></div>
<div class="b" style="left:305px;top:358.3px;width:1079px;height:1.0px;background:#e8ecef;"></div>
<div class="b" style="left:313.5px;top:336px;width:15.5px;height:15.5px;border:1px solid #cfd6dc;border-radius:3.5px;background:#fff;"></div>
<div class="t" style="left:385.7px;top:337.84px;font-size:12px;line-height:12px;color:#11171c;font-weight:700;letter-spacing:-0.2px;-webkit-text-stroke:0;">Run Name</div>
<div class="t" style="left:638.6px;top:337.84px;font-size:12px;line-height:12px;color:#11171c;font-weight:700;-webkit-text-stroke:0;">Created</div>
<svg style="left:744px;top:336px" width="18" height="16"><path d="M1.6 2.2 H13 M1.6 6.2 H10.6 M1.6 10.2 H6.4" stroke="#5f7281" stroke-width="1.5"/><path d="M11.8 6 V14 M8.8 11.2 L11.8 14.2 L14.8 11.2" stroke="#5f7281" stroke-width="1.5" fill="none"/></svg>
<div class="t" style="left:784.3px;top:337.84px;font-size:12px;line-height:12px;color:#11171c;font-weight:700;letter-spacing:-0.1px;-webkit-text-stroke:0;">Duration</div>
<div class="t" style="left:862px;top:337.84px;font-size:12px;line-height:12px;color:#11171c;font-weight:700;letter-spacing:-0.15px;-webkit-text-stroke:0;">Source</div>
<div class="t" style="left:959.2px;top:337.84px;font-size:12px;line-height:12px;color:#11171c;font-weight:700;letter-spacing:-0.1px;-webkit-text-stroke:0;">Models</div>
<div class="b" style="left:626px;top:359.3px;width:145.5px;height:415.7px;background:#f4f8fc;"></div>
<div class="b" style="left:771px;top:359.3px;width:1px;height:415.7px;background:#e6eaee;"></div>
<div class="b" style="left:1140.5px;top:359.3px;width:1.0px;height:415.7px;background:#e6eaee;"></div>
<div class="b" style="left:1314px;top:359.3px;width:1px;height:415.7px;background:#e6eaee;"></div>
<div class="b" style="left:305px;top:389.925px;width:836px;height:1.0px;background:#e6eaee;"></div>
<div class="b" style="left:313.5px;top:367.3px;width:15.5px;height:15.5px;border:1px solid #cfd6dc;border-radius:3.5px;background:#fff;"></div>
<svg style="left:637px;top:367.36px" width="16" height="16"><circle cx="7.9" cy="8.1" r="6.25" stroke="#277c43" stroke-width="1.45" fill="none"/><path d="M5.3 8.2 L7.2 10 L10.6 6.6" stroke="#277c43" stroke-width="1.35" fill="none"/></svg>
<svg style="left:957px;top:366.86px" width="18" height="18"><path d="M3.8 6.7 L13.9 4.5 L13.6 11.6 Z M3.8 6.7 L6.9 14.9 L13.6 11.6" stroke="#2068ac" stroke-width="1.3" fill="none"/><circle cx="3.8" cy="6.7" r="1.4" stroke="#2068ac" stroke-width="1.25" fill="#e3eef8"/><circle cx="13.9" cy="4.5" r="1.4" stroke="#2068ac" stroke-width="1.25" fill="#e3eef8"/><circle cx="13.6" cy="11.6" r="1.4" stroke="#2068ac" stroke-width="1.25" fill="#e3eef8"/><circle cx="6.9" cy="14.9" r="1.4" stroke="#2068ac" stroke-width="1.25" fill="#e3eef8"/></svg>
<svg style="left:860px;top:366.86px" width="16" height="18"><rect x="2.75" y="5.9" width="10.6" height="7.1" rx="1.3" stroke="#7d858c" stroke-width="1.3" fill="none"/><path d="M1.1 15 H14.9" stroke="#6f777e" stroke-width="1.5" stroke-linecap="round"/></svg>
<div class="t" style="left:385.7px;top:368.86px;width:230px;overflow:hidden;font-size:13px;line-height:13px;color:#2068ac;letter-spacing:0.15px;">384a74e8bb8e4a49b30b2f2e5d4452e3</div>
<div class="t" style="left:659.7px;top:368.86px;font-size:13px;line-height:13px;color:#11171c;font-weight:400;letter-spacing:-0.3px;">7 months ago</div>
<div class="t" style="left:784.3px;top:368.86px;font-size:13px;line-height:13px;color:#11171c;font-weight:400;">5.8s</div>
<div class="t" style="left:878.3px;top:368.86px;font-size:13px;line-height:13px;color:#11171c;font-weight:400;letter-spacing:-0.38px;">ipykerne...</div>
<div class="t" style="left:977.4px;top:368.86px;font-size:13px;line-height:13px;color:#11171c;"><span style="color:#2068ac;letter-spacing:-0.36px">wrapped_Ca.../169</span><span style="letter-spacing:-0.24px">, 1 more</span></div>
<div class="b" style="left:305px;top:421.05px;width:836px;height:1.0px;background:#e6eaee;"></div>
<div class="b" style="left:313.5px;top:398.425px;width:15.5px;height:15.5px;border:1px solid #cfd6dc;border-radius:3.5px;background:#fff;"></div>
<svg style="left:637px;top:398.49px" width="16" height="16"><circle cx="7.9" cy="8.1" r="6.25" stroke="#277c43" stroke-width="1.45" fill="none"/><path d="M5.3 8.2 L7.2 10 L10.6 6.6" stroke="#277c43" stroke-width="1.35" fill="none"/></svg>
<svg style="left:957px;top:397.99px" width="18" height="18"><path d="M3.8 6.7 L13.9 4.5 L13.6 11.6 Z M3.8 6.7 L6.9 14.9 L13.6 11.6" stroke="#2068ac" stroke-width="1.3" fill="none"/><circle cx="3.8" cy="6.7" r="1.4" stroke="#2068ac" stroke-width="1.25" fill="#e3eef8"/><circle cx="13.9" cy="4.5" r="1.4" stroke="#2068ac" stroke-width="1.25" fill="#e3eef8"/><circle cx="13.6" cy="11.6" r="1.4" stroke="#2068ac" stroke-width="1.25" fill="#e3eef8"/><circle cx="6.9" cy="14.9" r="1.4" stroke="#2068ac" stroke-width="1.25" fill="#e3eef8"/></svg>
<svg style="left:860px;top:397.99px" width="16" height="18"><rect x="2.75" y="5.9" width="10.6" height="7.1" rx="1.3" stroke="#7d858c" stroke-width="1.3" fill="none"/><path d="M1.1 15 H14.9" stroke="#6f777e" stroke-width="1.5" stroke-linecap="round"/></svg>
<div class="t" style="left:385.7px;top:399.99px;width:230px;overflow:hidden;font-size:13px;line-height:13px;color:#2068ac;letter-spacing:0.15px;">e6a11a6d259d4c138fcbd336e714747e</div>
<div class="t" style="left:659.7px;top:399.98px;font-size:13px;line-height:13px;color:#11171c;font-weight:400;letter-spacing:-0.3px;">9 months ago</div>
<div class="t" style="left:784.3px;top:399.98px;font-size:13px;line-height:13px;color:#11171c;font-weight:400;">4.2s</div>
<div class="t" style="left:878.3px;top:399.98px;font-size:13px;line-height:13px;color:#11171c;font-weight:400;letter-spacing:-0.38px;">ipykerne...</div>
<div class="t" style="left:977.4px;top:399.99px;font-size:13px;line-height:13px;color:#11171c;"><span style="color:#2068ac;letter-spacing:-0.36px">wrapped_XG.../11</span><span style="letter-spacing:-0.24px">, 1 more</span></div>
<div class="b" style="left:305px;top:452.175px;width:836px;height:1.0px;background:#e6eaee;"></div>
<div class="b" style="left:313.5px;top:429.55px;width:15.5px;height:15.5px;border:1px solid #cfd6dc;border-radius:3.5px;background:#fff;"></div>
<svg style="left:637px;top:429.61px" width="16" height="16"><circle cx="7.9" cy="8.1" r="6.25" stroke="#277c43" stroke-width="1.45" fill="none"/><path d="M5.3 8.2 L7.2 10 L10.6 6.6" stroke="#277c43" stroke-width="1.35" fill="none"/></svg>
<svg style="left:957px;top:429.11px" width="18" height="18"><path d="M3.8 6.7 L13.9 4.5 L13.6 11.6 Z M3.8 6.7 L6.9 14.9 L13.6 11.6" stroke="#2068ac" stroke-width="1.3" fill="none"/><circle cx="3.8" cy="6.7" r="1.4" stroke="#2068ac" stroke-width="1.25" fill="#e3eef8"/><circle cx="13.9" cy="4.5" r="1.4" stroke="#2068ac" stroke-width="1.25" fill="#e3eef8"/><circle cx="13.6" cy="11.6" r="1.4" stroke="#2068ac" stroke-width="1.25" fill="#e3eef8"/><circle cx="6.9" cy="14.9" r="1.4" stroke="#2068ac" stroke-width="1.25" fill="#e3eef8"/></svg>
<svg style="left:860px;top:429.11px" width="16" height="18"><rect x="2.75" y="5.9" width="10.6" height="7.1" rx="1.3" stroke="#7d858c" stroke-width="1.3" fill="none"/><path d="M1.1 15 H14.9" stroke="#6f777e" stroke-width="1.5" stroke-linecap="round"/></svg>
<div class="t" style="left:385.7px;top:431.11px;width:230px;overflow:hidden;font-size:13px;line-height:13px;color:#2068ac;letter-spacing:0.15px;">7b56975100834b5c86af954015f2e775</div>
<div class="t" style="left:659.7px;top:431.11px;font-size:13px;line-height:13px;color:#11171c;font-weight:400;letter-spacing:-0.3px;">9 months ago</div>
<div class="t" style="left:784.3px;top:431.11px;font-size:13px;line-height:13px;color:#11171c;font-weight:400;">5.5s</div>
<div class="t" style="left:878.3px;top:431.11px;font-size:13px;line-height:13px;color:#11171c;font-weight:400;letter-spacing:-0.38px;">ipykerne...</div>
<div class="t" style="left:977.4px;top:431.11px;font-size:13px;line-height:13px;color:#11171c;"><span style="color:#2068ac;letter-spacing:-0.36px">wrapped_XG.../10</span><span style="letter-spacing:-0.24px">, 1 more</span></div>
<div class="b" style="left:305px;top:483.3px;width:836px;height:1.0px;background:#e6eaee;"></div>
<div class="b" style="left:313.5px;top:460.675px;width:15.5px;height:15.5px;border:1px solid #cfd6dc;border-radius:3.5px;background:#fff;"></div>
<svg style="left:637px;top:460.74px" width="16" height="16"><circle cx="7.9" cy="8.1" r="6.25" stroke="#277c43" stroke-width="1.45" fill="none"/><path d="M5.3 8.2 L7.2 10 L10.6 6.6" stroke="#277c43" stroke-width="1.35" fill="none"/></svg>
<svg style="left:957px;top:460.24px" width="18" height="18"><path d="M3.8 6.7 L13.9 4.5 L13.6 11.6 Z M3.8 6.7 L6.9 14.9 L13.6 11.6" stroke="#2068ac" stroke-width="1.3" fill="none"/><circle cx="3.8" cy="6.7" r="1.4" stroke="#2068ac" stroke-width="1.25" fill="#e3eef8"/><circle cx="13.9" cy="4.5" r="1.4" stroke="#2068ac" stroke-width="1.25" fill="#e3eef8"/><circle cx="13.6" cy="11.6" r="1.4" stroke="#2068ac" stroke-width="1.25" fill="#e3eef8"/><circle cx="6.9" cy="14.9" r="1.4" stroke="#2068ac" stroke-width="1.25" fill="#e3eef8"/></svg>
<svg style="left:860px;top:460.24px" width="16" height="18"><rect x="2.75" y="5.9" width="10.6" height="7.1" rx="1.3" stroke="#7d858c" stroke-width="1.3" fill="none"/><path d="M1.1 15 H14.9" stroke="#6f777e" stroke-width="1.5" stroke-linecap="round"/></svg>
<div class="t" style="left:385.7px;top:462.24px;width:230px;overflow:hidden;font-size:13px;line-height:13px;color:#2068ac;letter-spacing:0.15px;">faca8990d7174bc296d751f0eff8c48a</div>
<div class="t" style="left:659.7px;top:462.23px;font-size:13px;line-height:13px;color:#11171c;font-weight:400;letter-spacing:-0.3px;">9 months ago</div>
<div class="t" style="left:784.3px;top:462.23px;font-size:13px;line-height:13px;color:#11171c;font-weight:400;">4.2s</div>
<div class="t" style="left:878.3px;top:462.23px;font-size:13px;line-height:13px;color:#11171c;font-weight:400;letter-spacing:-0.38px;">ipykerne...</div>
<div class="t" style="left:977.4px;top:462.24px;font-size:13px;line-height:13px;color:#11171c;"><span style="color:#2068ac;letter-spacing:-0.36px">wrapped_XG.../9</span><span style="letter-spacing:-0.24px">, 1 more</span></div>
<div class="b" style="left:305px;top:514.425px;width:836px;height:1.0px;background:#e6eaee;"></div>
<div class="b" style="left:313.5px;top:491.8px;width:15.5px;height:15.5px;border:1px solid #cfd6dc;border-radius:3.5px;background:#fff;"></div>
<svg style="left:637px;top:491.86px" width="16" height="16"><circle cx="7.9" cy="8.1" r="6.25" stroke="#277c43" stroke-width="1.45" fill="none"/><path d="M5.3 8.2 L7.2 10 L10.6 6.6" stroke="#277c43" stroke-width="1.35" fill="none"/></svg>
<svg style="left:957px;top:491.36px" width="18" height="18"><path d="M3.8 6.7 L13.9 4.5 L13.6 11.6 Z M3.8 6.7 L6.9 14.9 L13.6 11.6" stroke="#2068ac" stroke-width="1.3" fill="none"/><circle cx="3.8" cy="6.7" r="1.4" stroke="#2068ac" stroke-width="1.25" fill="#e3eef8"/><circle cx="13.9" cy="4.5" r="1.4" stroke="#2068ac" stroke-width="1.25" fill="#e3eef8"/><circle cx="13.6" cy="11.6" r="1.4" stroke="#2068ac" stroke-width="1.25" fill="#e3eef8"/><circle cx="6.9" cy="14.9" r="1.4" stroke="#2068ac" stroke-width="1.25" fill="#e3eef8"/></svg>
<svg style="left:860px;top:491.36px" width="16" height="18"><rect x="2.75" y="5.9" width="10.6" height="7.1" rx="1.3" stroke="#7d858c" stroke-width="1.3" fill="none"/><path d="M1.1 15 H14.9" stroke="#6f777e" stroke-width="1.5" stroke-linecap="round"/></svg>
<div class="t" style="left:385.7px;top:493.36px;width:230px;overflow:hidden;font-size:13px;line-height:13px;color:#2068ac;letter-spacing:0.15px;">59667b446b924c4ebf1f89535a5e1e71</div>
<div class="t" style="left:659.7px;top:493.36px;font-size:13px;line-height:13px;color:#11171c;font-weight:400;letter-spacing:-0.3px;">9 months ago</div>
<div class="t" style="left:784.3px;top:493.36px;font-size:13px;line-height:13px;color:#11171c;font-weight:400;">20.1s</div>
<div class="t" style="left:878.3px;top:493.36px;font-size:13px;line-height:13px;color:#11171c;font-weight:400;letter-spacing:-0.5px;">main.py</div>
<div class="t" style="left:977.4px;top:493.36px;font-size:13px;line-height:13px;color:#11171c;"><span style="color:#2068ac;letter-spacing:-0.36px">wrapped_Ca.../27</span><span style="letter-spacing:-0.24px">, 1 more</span></div>
<div class="b" style="left:305px;top:545.55px;width:836px;height:1.0px;background:#e6eaee;"></div>
<div class="b" style="left:313.5px;top:522.925px;width:15.5px;height:15.5px;border:1px solid #cfd6dc;border-radius:3.5px;background:#fff;"></div>
<svg style="left:637px;top:522.99px" width="16" height="16"><circle cx="7.9" cy="8.1" r="6.25" stroke="#277c43" stroke-width="1.45" fill="none"/><path d="M5.3 8.2 L7.2 10 L10.6 6.6" stroke="#277c43" stroke-width="1.35" fill="none"/></svg>
<svg style="left:957px;top:522.49px" width="18" height="18"><path d="M3.8 6.7 L13.9 4.5 L13.6 11.6 Z M3.8 6.7 L6.9 14.9 L13.6 11.6" stroke="#2068ac" stroke-width="1.3" fill="none"/><circle cx="3.8" cy="6.7" r="1.4" stroke="#2068ac" stroke-width="1.25" fill="#e3eef8"/><circle cx="13.9" cy="4.5" r="1.4" stroke="#2068ac" stroke-width="1.25" fill="#e3eef8"/><circle cx="13.6" cy="11.6" r="1.4" stroke="#2068ac" stroke-width="1.25" fill="#e3eef8"/><circle cx="6.9" cy="14.9" r="1.4" stroke="#2068ac" stroke-width="1.25" fill="#e3eef8"/></svg>
<svg style="left:860px;top:522.49px" width="16" height="18"><rect x="2.75" y="5.9" width="10.6" height="7.1" rx="1.3" stroke="#7d858c" stroke-width="1.3" fill="none"/><path d="M1.1 15 H14.9" stroke="#6f777e" stroke-width="1.5" stroke-linecap="round"/></svg>
<div class="t" style="left:385.7px;top:524.49px;width:230px;overflow:hidden;font-size:13px;line-height:13px;color:#2068ac;letter-spacing:0.15px;">daeaf6fed8854dc2b04a22082e111c07</div>
<div class="t" style="left:659.7px;top:524.48px;font-size:13px;line-height:13px;color:#11171c;font-weight:400;letter-spacing:-0.3px;">9 months ago</div>
<div class="t" style="left:784.3px;top:524.48px;font-size:13px;line-height:13px;color:#11171c;font-weight:400;">21.9s</div>
<div class="t" style="left:878.3px;top:524.48px;font-size:13px;line-height:13px;color:#11171c;font-weight:400;letter-spacing:-0.5px;">main.py</div>
<div class="t" style="left:977.4px;top:524.49px;font-size:13px;line-height:13px;color:#11171c;"><span style="color:#2068ac;letter-spacing:-0.36px">wrapped_Ca.../26</span><span style="letter-spacing:-0.24px">, 1 more</span></div>
<div class="b" style="left:305px;top:576.675px;width:836px;height:1.0px;background:#e6eaee;"></div>
<div class="b" style="left:313.5px;top:554.05px;width:15.5px;height:15.5px;border:1px solid #cfd6dc;border-radius:3.5px;background:#fff;"></div>
<svg style="left:637px;top:554.11px" width="16" height="16"><circle cx="7.9" cy="8.1" r="6.25" stroke="#277c43" stroke-width="1.45" fill="none"/><path d="M5.3 8.2 L7.2 10 L10.6 6.6" stroke="#277c43" stroke-width="1.35" fill="none"/></svg>
<svg style="left:957px;top:553.61px" width="18" height="18"><path d="M3.8 6.7 L13.9 4.5 L13.6 11.6 Z M3.8 6.7 L6.9 14.9 L13.6 11.6" stroke="#2068ac" stroke-width="1.3" fill="none"/><circle cx="3.8" cy="6.7" r="1.4" stroke="#2068ac" stroke-width="1.25" fill="#e3eef8"/><circle cx="13.9" cy="4.5" r="1.4" stroke="#2068ac" stroke-width="1.25" fill="#e3eef8"/><circle cx="13.6" cy="11.6" r="1.4" stroke="#2068ac" stroke-width="1.25" fill="#e3eef8"/><circle cx="6.9" cy="14.9" r="1.4" stroke="#2068ac" stroke-width="1.25" fill="#e3eef8"/></svg>
<svg style="left:860px;top:553.61px" width="16" height="18"><rect x="2.75" y="5.9" width="10.6" height="7.1" rx="1.3" stroke="#7d858c" stroke-width="1.3" fill="none"/><path d="M1.1 15 H14.9" stroke="#6f777e" stroke-width="1.5" stroke-linecap="round"/></svg>
<div class="t" style="left:385.7px;top:555.61px;width:230px;overflow:hidden;font-size:13px;line-height:13px;color:#2068ac;letter-spacing:0.15px;">4ce55f54e5374c2085f9f908861eef83</div>
<div class="t" style="left:659.7px;top:555.61px;font-size:13px;line-height:13px;color:#11171c;font-weight:400;letter-spacing:-0.3px;">9 months ago</div>
<div class="t" style="left:784.3px;top:555.61px;font-size:13px;line-height:13px;color:#11171c;font-weight:400;">20.3s</div>
<div class="t" style="left:878.3px;top:555.61px;font-size:13px;line-height:13px;color:#11171c;font-weight:400;letter-spacing:-0.5px;">main.py</div>
<div class="t" style="left:977.4px;top:555.61px;font-size:13px;line-height:13px;color:#11171c;"><span style="color:#2068ac;letter-spacing:-0.36px">wrapped_Ca.../25</span><span style="letter-spacing:-0.24px">, 1 more</span></div>
<div class="b" style="left:305px;top:607.8px;width:836px;height:1.0px;background:#e6eaee;"></div>
<div class="b" style="left:313.5px;top:585.175px;width:15.5px;height:15.5px;border:1px solid #cfd6dc;border-radius:3.5px;background:#fff;"></div>
<svg style="left:637px;top:585.24px" width="16" height="16"><circle cx="7.9" cy="8.1" r="6.25" stroke="#277c43" stroke-width="1.45" fill="none"/><path d="M5.3 8.2 L7.2 10 L10.6 6.6" stroke="#277c43" stroke-width="1.35" fill="none"/></svg>
<svg style="left:957px;top:584.74px" width="18" height="18"><path d="M3.8 6.7 L13.9 4.5 L13.6 11.6 Z M3.8 6.7 L6.9 14.9 L13.6 11.6" stroke="#2068ac" stroke-width="1.3" fill="none"/><circle cx="3.8" cy="6.7" r="1.4" stroke="#2068ac" stroke-width="1.25" fill="#e3eef8"/><circle cx="13.9" cy="4.5" r="1.4" stroke="#2068ac" stroke-width="1.25" fill="#e3eef8"/><circle cx="13.6" cy="11.6" r="1.4" stroke="#2068ac" stroke-width="1.25" fill="#e3eef8"/><circle cx="6.9" cy="14.9" r="1.4" stroke="#2068ac" stroke-width="1.25" fill="#e3eef8"/></svg>
<svg style="left:860px;top:584.74px" width="16" height="18"><rect x="2.75" y="5.9" width="10.6" height="7.1" rx="1.3" stroke="#7d858c" stroke-width="1.3" fill="none"/><path d="M1.1 15 H14.9" stroke="#6f777e" stroke-width="1.5" stroke-linecap="round"/></svg>
<div class="t" style="left:385.7px;top:586.74px;width:230px;overflow:hidden;font-size:13px;line-height:13px;color:#2068ac;letter-spacing:0.15px;">03bf3070f742484788023a2290819672</div>
<div class="t" style="left:659.7px;top:586.73px;font-size:13px;line-height:13px;color:#11171c;font-weight:400;letter-spacing:-0.3px;">9 months ago</div>
<div class="t" style="left:784.3px;top:586.73px;font-size:13px;line-height:13px;color:#11171c;font-weight:400;">24.9s</div>
<div class="t" style="left:878.3px;top:586.73px;font-size:13px;line-height:13px;color:#11171c;font-weight:400;letter-spacing:-0.5px;">main.py</div>
<div class="t" style="left:977.4px;top:586.74px;font-size:13px;line-height:13px;color:#11171c;"><span style="color:#2068ac;letter-spacing:-0.36px">wrapped_Ca.../24</span><span style="letter-spacing:-0.24px">, 1 more</span></div>
<div class="b" style="left:305px;top:638.925px;width:836px;height:1.0px;background:#e6eaee;"></div>
<div class="b" style="left:313.5px;top:616.3px;width:15.5px;height:15.5px;border:1px solid #cfd6dc;border-radius:3.5px;background:#fff;"></div>
<svg style="left:637px;top:616.36px" width="16" height="16"><circle cx="7.9" cy="8.1" r="6.25" stroke="#277c43" stroke-width="1.45" fill="none"/><path d="M5.3 8.2 L7.2 10 L10.6 6.6" stroke="#277c43" stroke-width="1.35" fill="none"/></svg>
<svg style="left:957px;top:615.86px" width="18" height="18"><path d="M3.8 6.7 L13.9 4.5 L13.6 11.6 Z M3.8 6.7 L6.9 14.9 L13.6 11.6" stroke="#2068ac" stroke-width="1.3" fill="none"/><circle cx="3.8" cy="6.7" r="1.4" stroke="#2068ac" stroke-width="1.25" fill="#e3eef8"/><circle cx="13.9" cy="4.5" r="1.4" stroke="#2068ac" stroke-width="1.25" fill="#e3eef8"/><circle cx="13.6" cy="11.6" r="1.4" stroke="#2068ac" stroke-width="1.25" fill="#e3eef8"/><circle cx="6.9" cy="14.9" r="1.4" stroke="#2068ac" stroke-width="1.25" fill="#e3eef8"/></svg>
<svg style="left:860px;top:615.86px" width="16" height="18"><rect x="2.75" y="5.9" width="10.6" height="7.1" rx="1.3" stroke="#7d858c" stroke-width="1.3" fill="none"/><path d="M1.1 15 H14.9" stroke="#6f777e" stroke-width="1.5" stroke-linecap="round"/></svg>
<div class="t" style="left:385.7px;top:617.86px;width:230px;overflow:hidden;font-size:13px;line-height:13px;color:#2068ac;letter-spacing:0.15px;">4ec6891fa8c04caeb2eebff88105cf77</div>
<div class="t" style="left:659.7px;top:617.86px;font-size:13px;line-height:13px;color:#11171c;font-weight:400;letter-spacing:-0.3px;">9 months ago</div>
<div class="t" style="left:784.3px;top:617.86px;font-size:13px;line-height:13px;color:#11171c;font-weight:400;">4.3s</div>
<div class="t" style="left:878.3px;top:617.86px;font-size:13px;line-height:13px;color:#11171c;font-weight:400;letter-spacing:-0.38px;">ipykerne...</div>
<div class="t" style="left:977.4px;top:617.86px;font-size:13px;line-height:13px;color:#11171c;"><span style="color:#2068ac;letter-spacing:-0.36px">wrapped_XG.../8</span><span style="letter-spacing:-0.24px">, 1 more</span></div>
<div class="b" style="left:305px;top:670.05px;width:836px;height:1.0px;background:#e6eaee;"></div>
<div class="b" style="left:313.5px;top:647.425px;width:15.5px;height:15.5px;border:1px solid #cfd6dc;border-radius:3.5px;background:#fff;"></div>
<svg style="left:637px;top:647.49px" width="16" height="16"><circle cx="7.9" cy="8.1" r="6.25" stroke="#277c43" stroke-width="1.45" fill="none"/><path d="M5.3 8.2 L7.2 10 L10.6 6.6" stroke="#277c43" stroke-width="1.35" fill="none"/></svg>
<svg style="left:957px;top:646.99px" width="18" height="18"><path d="M3.8 6.7 L13.9 4.5 L13.6 11.6 Z M3.8 6.7 L6.9 14.9 L13.6 11.6" stroke="#2068ac" stroke-width="1.3" fill="none"/><circle cx="3.8" cy="6.7" r="1.4" stroke="#2068ac" stroke-width="1.25" fill="#e3eef8"/><circle cx="13.9" cy="4.5" r="1.4" stroke="#2068ac" stroke-width="1.25" fill="#e3eef8"/><circle cx="13.6" cy="11.6" r="1.4" stroke="#2068ac" stroke-width="1.25" fill="#e3eef8"/><circle cx="6.9" cy="14.9" r="1.4" stroke="#2068ac" stroke-width="1.25" fill="#e3eef8"/></svg>
<svg style="left:860px;top:646.99px" width="16" height="18"><rect x="2.75" y="5.9" width="10.6" height="7.1" rx="1.3" stroke="#7d858c" stroke-width="1.3" fill="none"/><path d="M1.1 15 H14.9" stroke="#6f777e" stroke-width="1.5" stroke-linecap="round"/></svg>
<div class="t" style="left:385.7px;top:648.99px;width:230px;overflow:hidden;font-size:13px;line-height:13px;color:#2068ac;letter-spacing:0.15px;">552008da3ded419a9e7f1d6a83880ed0</div>
<div class="t" style="left:659.7px;top:648.98px;font-size:13px;line-height:13px;color:#11171c;font-weight:400;letter-spacing:-0.3px;">9 months ago</div>
<div class="t" style="left:784.3px;top:648.98px;font-size:13px;line-height:13px;color:#11171c;font-weight:400;">5.6s</div>
<div class="t" style="left:878.3px;top:648.98px;font-size:13px;line-height:13px;color:#11171c;font-weight:400;letter-spacing:-0.38px;">ipykerne...</div>
<div class="t" style="left:977.4px;top:648.99px;font-size:13px;line-height:13px;color:#11171c;"><span style="color:#2068ac;letter-spacing:-0.36px">wrapped_XG.../7</span><span style="letter-spacing:-0.24px">, 1 more</span></div>
<div class="b" style="left:305px;top:701.175px;width:836px;height:1.0px;background:#e6eaee;"></div>
<div class="b" style="left:313.5px;top:678.55px;width:15.5px;height:15.5px;border:1px solid #cfd6dc;border-radius:3.5px;background:#fff;"></div>
<svg style="left:637px;top:678.61px" width="16" height="16"><circle cx="7.9" cy="8.1" r="6.25" stroke="#277c43" stroke-width="1.45" fill="none"/><path d="M5.3 8.2 L7.2 10 L10.6 6.6" stroke="#277c43" stroke-width="1.35" fill="none"/></svg>
<svg style="left:957px;top:678.11px" width="18" height="18"><path d="M3.8 6.7 L13.9 4.5 L13.6 11.6 Z M3.8 6.7 L6.9 14.9 L13.6 11.6" stroke="#2068ac" stroke-width="1.3" fill="none"/><circle cx="3.8" cy="6.7" r="1.4" stroke="#2068ac" stroke-width="1.25" fill="#e3eef8"/><circle cx="13.9" cy="4.5" r="1.4" stroke="#2068ac" stroke-width="1.25" fill="#e3eef8"/><circle cx="13.6" cy="11.6" r="1.4" stroke="#2068ac" stroke-width="1.25" fill="#e3eef8"/><circle cx="6.9" cy="14.9" r="1.4" stroke="#2068ac" stroke-width="1.25" fill="#e3eef8"/></svg>
<svg style="left:860px;top:678.11px" width="16" height="18"><rect x="2.75" y="5.9" width="10.6" height="7.1" rx="1.3" stroke="#7d858c" stroke-width="1.3" fill="none"/><path d="M1.1 15 H14.9" stroke="#6f777e" stroke-width="1.5" stroke-linecap="round"/></svg>
<div class="t" style="left:385.7px;top:680.11px;width:230px;overflow:hidden;font-size:13px;line-height:13px;color:#2068ac;letter-spacing:0.15px;">f7426e5b64354e4b8a1f198576fea2a9</div>
<div class="t" style="left:659.7px;top:680.11px;font-size:13px;line-height:13px;color:#11171c;font-weight:400;letter-spacing:-0.3px;">9 months ago</div>
<div class="t" style="left:784.3px;top:680.11px;font-size:13px;line-height:13px;color:#11171c;font-weight:400;">6.8s</div>
<div class="t" style="left:878.3px;top:680.11px;font-size:13px;line-height:13px;color:#11171c;font-weight:400;letter-spacing:-0.38px;">ipykerne...</div>
<div class="t" style="left:977.4px;top:680.11px;font-size:13px;line-height:13px;color:#11171c;"><span style="color:#2068ac;letter-spacing:-0.36px">wrapped_XG.../6</span><span style="letter-spacing:-0.24px">, 1 more</span></div>
<div class="b" style="left:305px;top:732.3px;width:836px;height:1.0px;background:#e6eaee;"></div>
<div class="b" style="left:313.5px;top:709.675px;width:15.5px;height:15.5px;border:1px solid #cfd6dc;border-radius:3.5px;background:#fff;"></div>
<svg style="left:637px;top:709.74px" width="16" height="16"><circle cx="7.9" cy="8.1" r="6.25" stroke="#277c43" stroke-width="1.45" fill="none"/><path d="M5.3 8.2 L7.2 10 L10.6 6.6" stroke="#277c43" stroke-width="1.35" fill="none"/></svg>
<svg style="left:957px;top:709.24px" width="18" height="18"><path d="M3.8 6.7 L13.9 4.5 L13.6 11.6 Z M3.8 6.7 L6.9 14.9 L13.6 11.6" stroke="#2068ac" stroke-width="1.3" fill="none"/><circle cx="3.8" cy="6.7" r="1.4" stroke="#2068ac" stroke-width="1.25" fill="#e3eef8"/><circle cx="13.9" cy="4.5" r="1.4" stroke="#2068ac" stroke-width="1.25" fill="#e3eef8"/><circle cx="13.6" cy="11.6" r="1.4" stroke="#2068ac" stroke-width="1.25" fill="#e3eef8"/><circle cx="6.9" cy="14.9" r="1.4" stroke="#2068ac" stroke-width="1.25" fill="#e3eef8"/></svg>
<svg style="left:860px;top:709.24px" width="16" height="18"><rect x="2.75" y="5.9" width="10.6" height="7.1" rx="1.3" stroke="#7d858c" stroke-width="1.3" fill="none"/><path d="M1.1 15 H14.9" stroke="#6f777e" stroke-width="1.5" stroke-linecap="round"/></svg>
<div class="t" style="left:385.7px;top:711.24px;width:230px;overflow:hidden;font-size:13px;line-height:13px;color:#2068ac;letter-spacing:0.15px;">12e119e8ab5a490db13911457ecd4f81</div>
<div class="t" style="left:659.7px;top:711.23px;font-size:13px;line-height:13px;color:#11171c;font-weight:400;letter-spacing:-0.3px;">9 months ago</div>
<div class="t" style="left:784.3px;top:711.23px;font-size:13px;line-height:13px;color:#11171c;font-weight:400;">6.3s</div>
<div class="t" style="left:878.3px;top:711.23px;font-size:13px;line-height:13px;color:#11171c;font-weight:400;letter-spacing:-0.38px;">ipykerne...</div>
<div class="t" style="left:977.4px;top:711.24px;font-size:13px;line-height:13px;color:#11171c;"><span style="color:#2068ac;letter-spacing:-0.36px">wrapped_XG.../5</span><span style="letter-spacing:-0.24px">, 1 more</span></div>
<div class="b" style="left:305px;top:763.425px;width:836px;height:1.0px;background:#e6eaee;"></div>
<div class="b" style="left:313.5px;top:740.8px;width:15.5px;height:15.5px;border:1px solid #cfd6dc;border-radius:3.5px;background:#fff;"></div>
<svg style="left:637px;top:740.86px" width="16" height="16"><circle cx="7.9" cy="8.1" r="6.25" stroke="#277c43" stroke-width="1.45" fill="none"/><path d="M5.3 8.2 L7.2 10 L10.6 6.6" stroke="#277c43" stroke-width="1.35" fill="none"/></svg>
<svg style="left:957px;top:740.36px" width="18" height="18"><path d="M3.8 6.7 L13.9 4.5 L13.6 11.6 Z M3.8 6.7 L6.9 14.9 L13.6 11.6" stroke="#2068ac" stroke-width="1.3" fill="none"/><circle cx="3.8" cy="6.7" r="1.4" stroke="#2068ac" stroke-width="1.25" fill="#e3eef8"/><circle cx="13.9" cy="4.5" r="1.4" stroke="#2068ac" stroke-width="1.25" fill="#e3eef8"/><circle cx="13.6" cy="11.6" r="1.4" stroke="#2068ac" stroke-width="1.25" fill="#e3eef8"/><circle cx="6.9" cy="14.9" r="1.4" stroke="#2068ac" stroke-width="1.25" fill="#e3eef8"/></svg>
<svg style="left:860px;top:740.36px" width="16" height="18"><rect x="2.75" y="5.9" width="10.6" height="7.1" rx="1.3" stroke="#7d858c" stroke-width="1.3" fill="none"/><path d="M1.1 15 H14.9" stroke="#6f777e" stroke-width="1.5" stroke-linecap="round"/></svg>
<div class="t" style="left:385.7px;top:742.36px;width:230px;overflow:hidden;font-size:13px;line-height:13px;color:#2068ac;letter-spacing:0.15px;">a2acbf39ddba4aeabc235240839f460e</div>
<div class="t" style="left:659.7px;top:742.36px;font-size:13px;line-height:13px;color:#11171c;font-weight:400;letter-spacing:-0.3px;">9 months ago</div>
<div class="t" style="left:784.3px;top:742.36px;font-size:13px;line-height:13px;color:#11171c;font-weight:400;">6.4s</div>
<div class="t" style="left:878.3px;top:742.36px;font-size:13px;line-height:13px;color:#11171c;font-weight:400;letter-spacing:-0.38px;">ipykerne...</div>
<div class="t" style="left:977.4px;top:742.36px;font-size:13px;line-height:13px;color:#11171c;"><span style="color:#2068ac;letter-spacing:-0.36px">wrapped_XG.../4</span><span style="letter-spacing:-0.24px">, 1 more</span></div>
<div class="b" style="left:313.5px;top:771.925px;width:15.5px;height:15.5px;border:1px solid #cfd6dc;border-radius:3.5px;background:#fff;"></div>
<svg style="left:637px;top:771.99px" width="16" height="16"><circle cx="7.9" cy="8.1" r="6.25" stroke="#277c43" stroke-width="1.45" fill="none"/><path d="M5.3 8.2 L7.2 10 L10.6 6.6" stroke="#277c43" stroke-width="1.35" fill="none"/></svg>
<svg style="left:957px;top:771.49px" width="18" height="18"><path d="M3.8 6.7 L13.9 4.5 L13.6 11.6 Z M3.8 6.7 L6.9 14.9 L13.6 11.6" stroke="#2068ac" stroke-width="1.3" fill="none"/><circle cx="3.8" cy="6.7" r="1.4" stroke="#2068ac" stroke-width="1.25" fill="#e3eef8"/><circle cx="13.9" cy="4.5" r="1.4" stroke="#2068ac" stroke-width="1.25" fill="#e3eef8"/><circle cx="13.6" cy="11.6" r="1.4" stroke="#2068ac" stroke-width="1.25" fill="#e3eef8"/><circle cx="6.9" cy="14.9" r="1.4" stroke="#2068ac" stroke-width="1.25" fill="#e3eef8"/></svg>
<svg style="left:860px;top:771.49px" width="16" height="18"><rect x="2.75" y="5.9" width="10.6" height="7.1" rx="1.3" stroke="#7d858c" stroke-width="1.3" fill="none"/><path d="M1.1 15 H14.9" stroke="#6f777e" stroke-width="1.5" stroke-linecap="round"/></svg>
<svg style="left:1218px;top:382px" width="18" height="18"><circle cx="9.4" cy="8.6" r="7" stroke="#404b54" stroke-width="1.3" fill="none"/><path d="M5.9 8.6 H12.9 M9.4 5.1 V12.1" stroke="#404b54" stroke-width="1.3"/></svg>
<div class="t" style="left:1169.6px;top:405.20px;font-size:13px;line-height:13px;color:#5f7281;font-weight:400;letter-spacing:0.08px;">Show more metrics</div>
<div class="t" style="left:1167.3px;top:424.60px;font-size:13px;line-height:13px;color:#5f7281;font-weight:400;letter-spacing:0.1px;">and parameters (59)</div>
<svg style="left:0;top:765px" width="10" height="10"><path d="M0 6.5 A3.5 3.5 0 0 0 3.5 10 L0 10 Z" fill="#000"/></svg>
<svg style="left:1390px;top:765px" width="10" height="10"><path d="M10 6.5 A3.5 3.5 0 0 1 6.5 10 L10 10 Z" fill="#000"/></svg>
<div class="b" style="left:1325px;top:74px;width:59.5px;height:31px;background:#2068ac;border-radius:4px;"></div>
<div class="t" style="left:1337.5px;top:83.50px;font-size:13px;line-height:13px;color:#fff;font-weight:400;">Share</div>
</body></html>
